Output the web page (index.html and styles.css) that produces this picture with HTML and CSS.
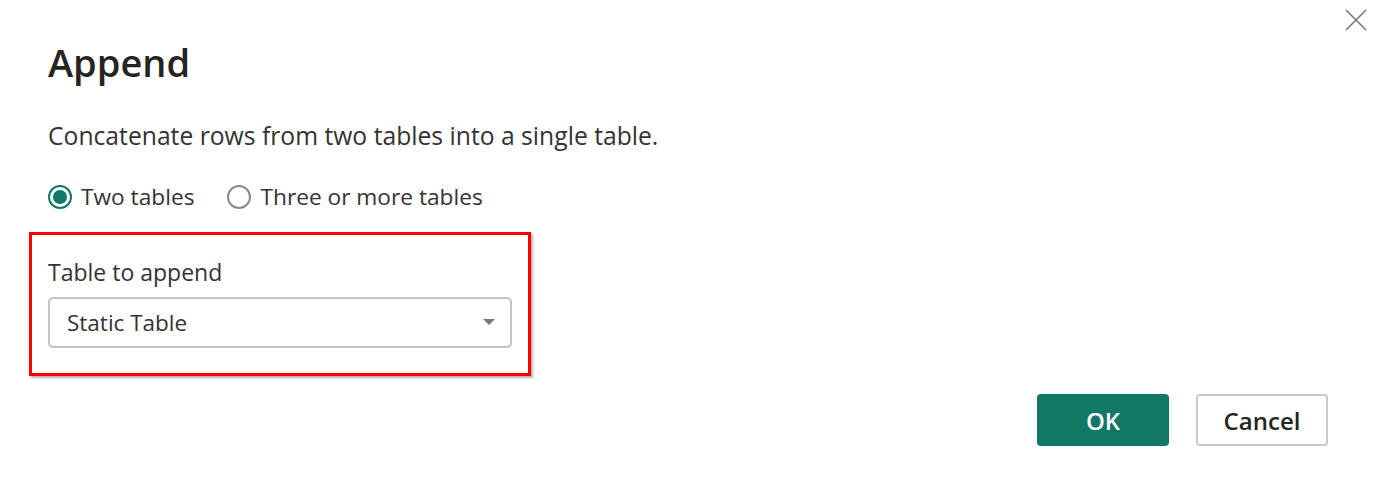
FILE: index.html
```html
<!DOCTYPE html>
<html lang="en">
<head>
<meta charset="utf-8">
<title>Append</title>
<link rel="stylesheet" href="styles.css">
</head>
<body>
<div class="dialog">
  <button class="close" aria-label="Close">
    <svg width="22" height="22" viewBox="0 0 22 22"><path d="M1 1 L21 21 M21 1 L1 21" stroke="#777" stroke-width="1.6" fill="none"/></svg>
  </button>
  <h1 class="title">Append</h1>
  <p class="desc">Concatenate rows from two tables into a single table.</p>
  <div class="radios">
    <label class="radio"><span class="dot checked"></span>Two tables</label>
    <label class="radio"><span class="dot"></span>Three or more tables</label>
  </div>
  <div class="highlight">
    <div class="field-label">Table to append</div>
    <div class="select">
      <span>Static Table</span>
      <svg class="caret" width="12" height="7" viewBox="0 0 12 7"><path d="M0 0 H12 L6 6 Z" fill="#777"/></svg>
    </div>
  </div>
  <div class="actions">
    <button class="btn primary">OK</button>
    <button class="btn secondary">Cancel</button>
  </div>
</div>
</body>
</html>
```
FILE: styles.css
```css
html, body {
  margin: 0;
  padding: 0;
  background: #ffffff;
}
body {
  font-family: "Open Sans", "Noto Sans", sans-serif;
  color: #333333;
}
.dialog {
  position: relative;
  width: 1380px;
  height: 497px;
  box-sizing: border-box;
  padding: 38px 52px 0 48px;
  display: flex;
  flex-direction: column;
}
.close {
  position: absolute;
  top: 9px;
  right: 13px;
  width: 22px;
  height: 22px;
  padding: 0;
  border: 0;
  background: transparent;
  display: flex;
}
.title {
  margin: 0;
  font-size: 38px;
  line-height: 48px;
  font-weight: 600;
  color: #252423;
}
.desc {
  margin: 35px 0 0 0;
  font-size: 24.7px;
  line-height: 30px;
}
.radios {
  margin-top: 31px;
  display: flex;
  gap: 33px;
}
.radio {
  display: flex;
  align-items: center;
  gap: 9px;
  font-size: 22.7px;
  line-height: 30px;
}
.dot {
  width: 24px;
  height: 24px;
  box-sizing: border-box;
  border-radius: 50%;
  border: 2px solid #8a8a8a;
  display: flex;
  align-items: center;
  justify-content: center;
}
.dot.checked {
  border-color: #117865;
}
.dot.checked::after {
  content: "";
  width: 14px;
  height: 14px;
  border-radius: 50%;
  background: #117865;
}
.highlight {
  margin: 20px 0 0 -19px;
  width: 502px;
  height: 144px;
  box-sizing: border-box;
  border: 3px solid #ff0000;
  box-shadow: 2px 2px 2px rgba(0, 0, 0, 0.3);
  padding: 22px 16px 0 16px;
}
.field-label {
  font-size: 23px;
  line-height: 30px;
}
.select {
  margin-top: 10px;
  height: 51px;
  box-sizing: border-box;
  border: 2px solid #c4c4c4;
  border-radius: 5px;
  display: flex;
  align-items: center;
  justify-content: space-between;
  padding: 0 15px 0 17px;
  font-size: 22.5px;
}
.actions {
  margin-top: 18px;
  display: flex;
  justify-content: flex-end;
  gap: 27px;
}
.btn {
  width: 132px;
  height: 52px;
  box-sizing: border-box;
  border-radius: 4px;
  font-family: "Open Sans", "Noto Sans", sans-serif;
  font-size: 24px;
  font-weight: 600;
}
.primary {
  background: #117865;
  color: #ffffff;
  border: 0;
}
.secondary {
  background: #ffffff;
  color: #252423;
  border: 2px solid #c8c8c8;
}
```
